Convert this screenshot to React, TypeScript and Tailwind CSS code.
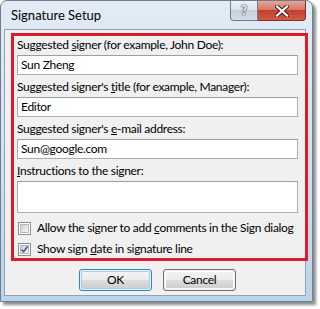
import React from 'react';

const font = "font-['Lato','Segoe_UI',sans-serif]";

const Field: React.FC<{ label: React.ReactNode; value?: string; tall?: boolean; first?: boolean }> = ({ label, value, tall, first }) => (
  <div className={first ? '' : 'mt-[4px]'}>
    <div className="h-[16px] leading-[16px] whitespace-nowrap">{label}</div>
    <div
      className={`mt-[2px] w-[281px] ${tall ? 'h-[32px]' : 'h-[20px]'} bg-white border border-[#abadb3] border-t-[#9b9ea6] px-[3px] leading-[18px] text-black`}
    >
      {value}
    </div>
  </div>
);

const CheckBox: React.FC<{ checked?: boolean }> = ({ checked }) => (
  <div className="w-[13px] h-[13px] border border-[#8e8f8f] bg-white p-px shrink-0">
    <div className="w-full h-full bg-gradient-to-br from-[#cbcfd5] to-[#f6f6f6] border border-[#b5b8bd] relative">
      {checked && (
        <svg viewBox="0 0 9 9" className="absolute -left-px -top-px w-[9px] h-[9px]">
          <path d="M1.5 4.5 L3.6 6.8 L7.6 1.4" fill="none" stroke="#4a5f8c" strokeWidth="1.6" />
        </svg>
      )}
    </div>
  </div>
);

const Btn: React.FC<{ children: React.ReactNode; def?: boolean }> = ({ children, def }) => (
  <div
    className={`w-[73px] h-[22px] rounded-[3px] border ${def ? 'border-[#3c7fb1]' : 'border-[#707070]'} p-px`}
  >
    <div
      className={`w-full h-full rounded-[2px] ${def ? 'border border-[#8fd5f5]' : 'border border-[#fbfbfb]'} bg-[linear-gradient(to_bottom,#f2f2f2_0%,#ebebeb_50%,#dddddd_50%,#cfcfcf_100%)] flex items-center justify-center leading-none text-black`}
    >
      {children}
    </div>
  </div>
);

export default function App() {
  return (
    <div className={`w-[320px] h-[309px] bg-white ${font} text-[12px] tracking-[-0.3px] text-black`}>
      <div className="w-[313px] h-[302px] rounded-t-[7px] border border-[#6e7d8d] bg-gradient-to-b from-[#e2ebf5] via-[#d3e1ef] to-[#bcd3ec] shadow-[3px_3px_3px_rgba(0,0,0,0.45)] flex flex-col">
        <div className="h-[28px] flex items-start shrink-0">
          <div className="pl-[10px] pt-[6px] leading-[16px] text-[13px] tracking-normal">Signature Setup</div>
          <div className="ml-auto mr-[6px] flex">
            <div className="w-[28px] h-[20px] rounded-bl-[4px] border border-t-0 border-[#6d7b8c] bg-[linear-gradient(to_bottom,#eef2f7_0%,#d9e2ec_50%,#c2cfdd_50%,#d3deea_100%)] flex items-center justify-center">
              <span className="text-white font-bold text-[13px] leading-none [text-shadow:0_0_1px_#333,0_0_1px_#333,0_0_2px_#555]">?</span>
            </div>
            <div className="w-[48px] h-[20px] rounded-br-[4px] border border-l-0 border-t-0 border-[#7c3229] bg-[linear-gradient(to_bottom,#e8a597_0%,#d47a6b_45%,#c0402f_50%,#d35a43_100%)] flex items-center justify-center">
              <svg viewBox="0 0 14 12" className="w-[14px] h-[12px]">
                <path d="M2 1.5 L12 10.5 M12 1.5 L2 10.5" stroke="#3c1a16" strokeWidth="4" strokeLinecap="square" />
                <path d="M2 1.5 L12 10.5 M12 1.5 L2 10.5" stroke="#ffffff" strokeWidth="2.2" strokeLinecap="square" />
              </svg>
            </div>
          </div>
        </div>
        <div className="ml-[3px] mr-[6px] mb-[5px] flex-1 border border-[#8ea3bb] bg-[#f0f0f0] flex flex-col">
          <div className="ml-[6px] mt-[3px] w-[297px] border-[3px] border-[#dc1c2a] pl-[3px] pt-px pb-px">
            <Field first label={<>Suggested <u>s</u>igner (for example, John Doe):</>} value="Sun Zheng" />
            <Field label={<>Suggested signer's <u>t</u>itle (for example, Manager):</>} value="Editor" />
            <Field label={<>Suggested signer's <u>e</u>-mail address:</>} value="Sun@google.com" />
            <Field label={<><u>I</u>nstructions to the signer:</>} tall />
            <div className="mt-[7px] h-[16px] flex items-center gap-[6px] pl-px whitespace-nowrap">
              <CheckBox />
              <span className="leading-[16px]">Allow the signer to add <u>c</u>omments in the Sign dialog</span>
            </div>
            <div className="mt-[5px] h-[16px] flex items-center gap-[6px] pl-px whitespace-nowrap">
              <CheckBox checked />
              <span className="leading-[16px]">Show sign <u>d</u>ate in signature line</span>
            </div>
          </div>
          <div className="mt-[8px] ml-[74px] flex gap-[11px]">
            <Btn def>OK</Btn>
            <Btn>Cancel</Btn>
          </div>
        </div>
      </div>
    </div>
  );
}
